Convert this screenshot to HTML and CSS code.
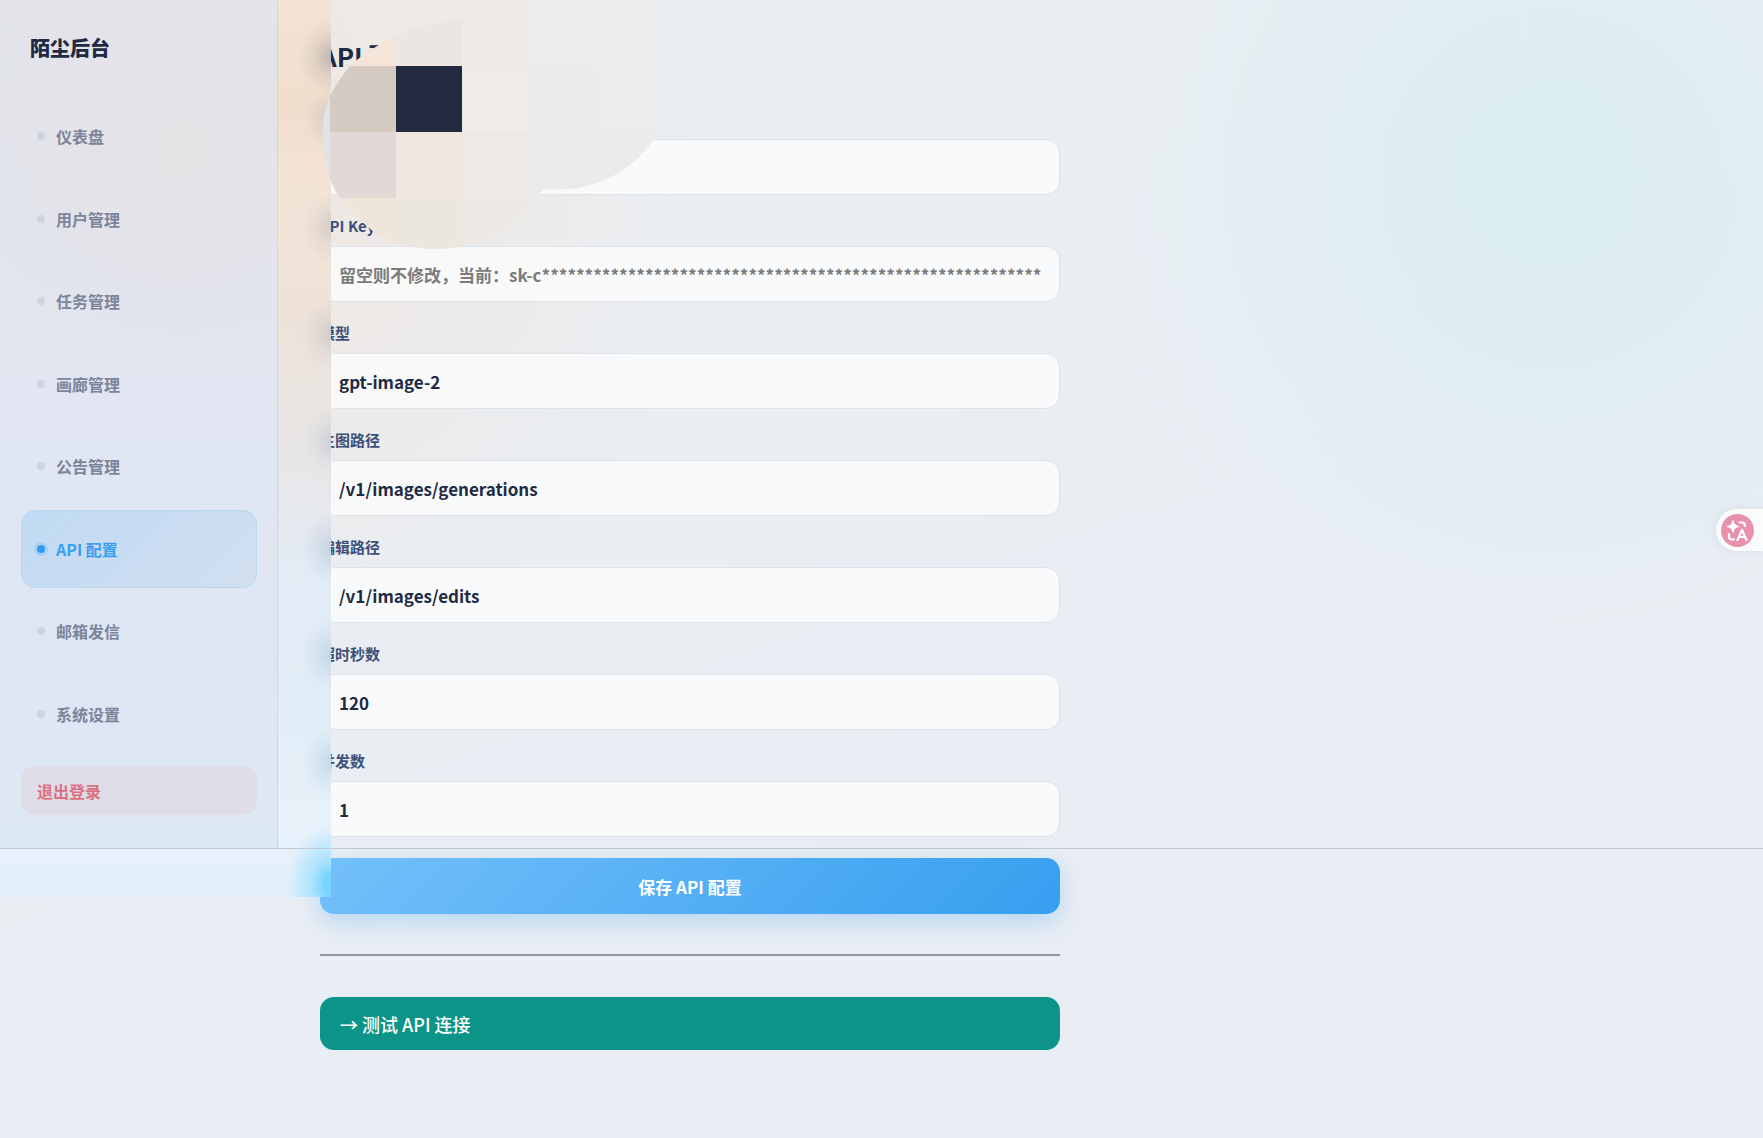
FILE: index.html
```html
<!DOCTYPE html>
<html lang="zh-CN">
<head>
<meta charset="utf-8">
<meta name="viewport" content="width=device-width, initial-scale=1">
<title>陌尘后台</title>
<link rel="stylesheet" href="styles.css">
</head>
<body>
<div class="layout">
  <aside class="sidebar">
    <div class="panel">
      <div class="brand">陌尘后台</div>
      <nav class="nav">
        <a class="nav-item" href="#dashboard">仪表盘</a>
        <a class="nav-item" href="#users">用户管理</a>
        <a class="nav-item" href="#tasks">任务管理</a>
        <a class="nav-item" href="#gallery">画廊管理</a>
        <a class="nav-item" href="#notices">公告管理</a>
        <a class="nav-item active" href="#api" aria-current="page">API 配置</a>
        <a class="nav-item" href="#mail">邮箱发信</a>
        <a class="nav-item" href="#settings">系统设置</a>
      </nav>
      <button class="logout" type="button">退出登录</button>
    </div>
  </aside>

  <main class="content">
    <h1 class="title">API 配置</h1>
    <form class="form">
      <div class="field">
        <label for="base">API</label>
        <input id="base" type="text">
      </div>
      <div class="field">
        <label for="key">API Key</label>
        <input id="key" type="text" placeholder="留空则不修改，当前：sk-c**********************************************************">
      </div>
      <div class="field">
        <label for="model">模型</label>
        <input id="model" type="text" value="gpt-image-2">
      </div>
      <div class="field">
        <label for="gen">生图路径</label>
        <input id="gen" type="text" value="/v1/images/generations">
      </div>
      <div class="field">
        <label for="edit">编辑路径</label>
        <input id="edit" type="text" value="/v1/images/edits">
      </div>
      <div class="field">
        <label for="timeout">超时秒数</label>
        <input id="timeout" type="text" inputmode="numeric" value="120">
      </div>
      <div class="field">
        <label for="parallel">并发数</label>
        <input id="parallel" type="text" inputmode="numeric" value="1">
      </div>
      <button class="save" type="submit">保存 API 配置</button>
    </form>
    <hr class="rule">
    <button class="test" type="button">→ 测试 API 连接</button>
  </main>
</div>

<svg class="mosaic" width="680" height="260" viewBox="0 0 680 260" aria-hidden="true">
  <defs>
    <clipPath id="brush">
      <path d="M350 66C338 81 323 100 323 130C323 160 330 184 340 198C348 210 362 222 374 232C386 242 410 249 435 249C482 249 520 227 540 194L543 189C600 194 636 166 655 138L660 132V0H462V20C440 20 420 25 396 36C380 44 362 54 350 66Z"/>
    </clipPath>
  </defs>
  <g clip-path="url(#brush)" shape-rendering="crispEdges">
    <rect x="320" y="66" width="10" height="132" fill="#e0e3e8"/>
    <rect x="330" y="0" width="66" height="66" fill="#f4e5d8"/>
    <rect x="396" y="0" width="66" height="66" fill="#ebe6e1"/>
    <rect x="462" y="0" width="66" height="66" fill="#eeebe7"/>
    <rect x="528" y="0" width="66" height="66" fill="#edecec"/>
    <rect x="594" y="0" width="66" height="66" fill="#ecedef"/>
    <rect x="330" y="66" width="66" height="66" fill="#d5cbc2"/>
    <rect x="396" y="66" width="66" height="66" fill="#232a40"/>
    <rect x="462" y="66" width="66" height="66" fill="#eeebe8"/>
    <rect x="528" y="66" width="66" height="66" fill="#ecebeb"/>
    <rect x="594" y="66" width="66" height="66" fill="#ebecee"/>
    <rect x="330" y="132" width="66" height="66" fill="#e1d9d5"/>
    <rect x="396" y="132" width="66" height="66" fill="#f0e6e0"/>
    <rect x="462" y="132" width="66" height="66" fill="#ece9e6"/>
    <rect x="528" y="132" width="66" height="66" fill="#ebeae9"/>
    <rect x="594" y="132" width="66" height="66" fill="#ebebeb"/>
    <rect x="330" y="198" width="66" height="62" fill="#f0e5d9"/>
    <rect x="396" y="198" width="66" height="62" fill="#ebe7df"/>
    <rect x="462" y="198" width="198" height="62" fill="#ece9e5"/>
  </g>
</svg>

<button class="translate" type="button" aria-label="翻译">
  <svg width="33" height="33" viewBox="0 0 33 33" aria-hidden="true">
    <circle cx="16.500" cy="16.500" r="16.500" fill="#e791ad"/>
    <path d="M12 6.500Q12.800 11.700 18 12.500Q12.800 13.300 12 18.500Q11.200 13.300 6 12.500Q11.200 11.700 12 6.500Z" fill="#fff" stroke="#fff" stroke-linejoin="round"/>
    <g fill="none" stroke="#fff" stroke-width="2.200" stroke-linecap="round" stroke-linejoin="round">
      <path d="M18.500 8.500H21Q24 8.500 24 12"/>
      <path d="M8 20V22.500Q8 25.500 11 25.500H13"/>
      <path d="M16.500 26L21 16L25.500 26M18 23H24"/>
    </g>
  </svg>
</button>
</body>
</html>
```
FILE: styles.css
```css
* {
  box-sizing: border-box;
}

body {
  margin: 0;
  overflow-x: hidden;
  font-family: "Noto Sans CJK SC", "Noto Sans", sans-serif;
  color: #1f2a44;
}

button,
input {
  font-family: inherit;
}

.layout {
  display: grid;
  grid-template-columns: 278px minmax(0, 1fr);
  align-items: start;
  min-height: 100vh;
  background:
    radial-gradient(circle 460px at 88% 180px, rgba(206, 236, 236, 0.6), rgba(206, 236, 236, 0)),
    radial-gradient(circle 560px at 180px 120px, rgba(242, 224, 208, 0.65), rgba(242, 228, 214, 0)),
    linear-gradient(160deg, #ebeff3, #e9eef4 60%, #e9ecf3);
}

/* Sidebar */
.sidebar {
  position: relative;
  z-index: 1;
}

.sidebar::before {
  content: "";
  position: absolute;
  z-index: -1;
  inset: 0 -53px -49px 0;
  background:
    radial-gradient(ellipse 32px 38px at 100% 57px, rgba(60, 70, 100, 0.28), rgba(60, 70, 100, 0.1) 50%, rgba(60, 70, 100, 0)),
    radial-gradient(ellipse 26px 30px at 100% 118px, rgba(70, 90, 130, 0.16), rgba(70, 90, 130, 0)),
    radial-gradient(ellipse 30px 36px at 100% 227px, rgba(70, 90, 130, 0.18), rgba(70, 90, 130, 0.06) 50%, rgba(70, 90, 130, 0)),
    radial-gradient(ellipse 30px 36px at 100% 334px, rgba(70, 90, 130, 0.18), rgba(70, 90, 130, 0.06) 50%, rgba(70, 90, 130, 0)),
    radial-gradient(ellipse 30px 36px at 100% 441px, rgba(70, 100, 150, 0.18), rgba(70, 100, 150, 0.06) 50%, rgba(70, 100, 150, 0)),
    radial-gradient(ellipse 30px 36px at 100% 548px, rgba(70, 110, 160, 0.2), rgba(70, 110, 160, 0.08) 50%, rgba(70, 110, 160, 0)),
    radial-gradient(ellipse 30px 36px at 100% 655px, rgba(70, 120, 170, 0.2), rgba(70, 120, 170, 0.08) 50%, rgba(70, 120, 170, 0)),
    radial-gradient(ellipse 30px 36px at 100% 762px, rgba(70, 120, 170, 0.2), rgba(70, 120, 170, 0.08) 50%, rgba(70, 120, 170, 0)),
    radial-gradient(ellipse 44px 60px at 100% 885px, #78d4ff 15%, rgba(150, 222, 255, 0.7) 45%, rgba(190, 230, 255, 0)),
    linear-gradient(180deg, #f4e3d4, #f0decd 12%, #f3e4d7 20%, #eee2d8 34%, #e9e5e2 46%, #e6e8ec 56%, #e3ebf5 64%, #e1edf6 78%, #e7f1fa 92%, #e4f0fa);
}

/* hairline along the bottom of the shell */
.sidebar::after {
  content: "";
  position: absolute;
  top: 100%;
  left: 0;
  width: 100vw;
  height: 1px;
  background: #c0c9d3;
}

.panel {
  display: flex;
  flex-direction: column;
  min-height: 848px;
  padding: 32px 20px 33px 21px;
  border-right: 1px solid #cfd6e0;
  background:
    radial-gradient(circle 230px at 180px 150px, #e5e2e5, rgba(229, 226, 229, 0)),
    linear-gradient(180deg, #e2e4ea, #e0e6f2 55%, #dfe6f4 85%, #dde9f5);
}

.brand {
  padding-left: 9px;
  margin-bottom: 33px;
  font-size: 20px;
  line-height: 32px;
  font-weight: 900;
}

.nav {
  display: grid;
  grid-auto-rows: 1fr;
  gap: 4px;
  flex: 1;
}

.nav-item {
  display: flex;
  align-items: center;
  gap: 11px;
  padding: 0 15px;
  border: 1px solid transparent;
  border-radius: 14px;
  color: #7a849b;
  font-size: 16px;
  font-weight: 700;
  text-decoration: none;
}

.nav-item::before {
  content: "";
  width: 8px;
  height: 8px;
  border-radius: 50%;
  background: #cdd3df;
}

.nav-item.active {
  border-color: #bad8ee;
  background: linear-gradient(135deg, #c0daf3, #d2dff0);
  color: #389ff0;
}

.nav-item.active::before {
  background: #339af0;
  box-shadow: 0 0 0 3px #a9d0f3;
}

.logout {
  height: 49px;
  margin-top: 13px;
  padding: 0 16px;
  border: 0;
  border-radius: 14px;
  background: #dfdde8;
  color: #dc6f80;
  font-size: 16px;
  font-weight: 700;
  text-align: left;
}

/* Content */
.content {
  max-width: 824px;
  padding: 39px 42px 80px;
}

.title {
  margin: 0 0 36px;
  font-size: 26px;
  line-height: 34px;
  font-weight: 700;
}

.form {
  display: flex;
  flex-direction: column;
  gap: 21px;
}

.field {
  display: flex;
  flex-direction: column;
  gap: 10px;
}

.field label {
  color: #3d5078;
  font-size: 15px;
  line-height: 20px;
  font-weight: 700;
}

.field input {
  width: 100%;
  height: 56px;
  padding: 0 18px;
  border: 1px solid #dde3ea;
  border-radius: 14px;
  background: rgba(255, 255, 255, 0.7);
  color: #1f2a44;
  font-size: 17px;
  font-weight: 700;
}

.field input::placeholder {
  color: #7b7b7b;
  opacity: 1;
}

.save {
  height: 56px;
  border: 0;
  border-radius: 14px;
  background: linear-gradient(135deg, #74c0fa, #369fef);
  box-shadow: 0 8px 24px rgba(51, 154, 240, 0.28);
  color: #fff;
  font-size: 17px;
  font-weight: 700;
}

.rule {
  height: 2px;
  margin: 40px 0 41px;
  border: 0;
  background: #8f95a8;
}

.test {
  width: 100%;
  height: 53px;
  padding: 0 20px;
  border: 0;
  border-radius: 14px;
  background: #0d9488;
  color: #fff;
  font-size: 18px;
  font-weight: 500;
  text-align: left;
}

/* Overlays */
.mosaic {
  position: absolute;
  top: 0;
  left: 0;
  z-index: 2;
  pointer-events: none;
}

.translate {
  position: fixed;
  right: 0;
  top: 509px;
  z-index: 3;
  display: flex;
  align-items: center;
  height: 42px;
  padding: 0 9px 0 5px;
  border: 0;
  border-radius: 21px 0 0 21px;
  background: #f9fbfc;
  box-shadow: 0 0 8px rgba(120, 140, 160, 0.18);
}
```
